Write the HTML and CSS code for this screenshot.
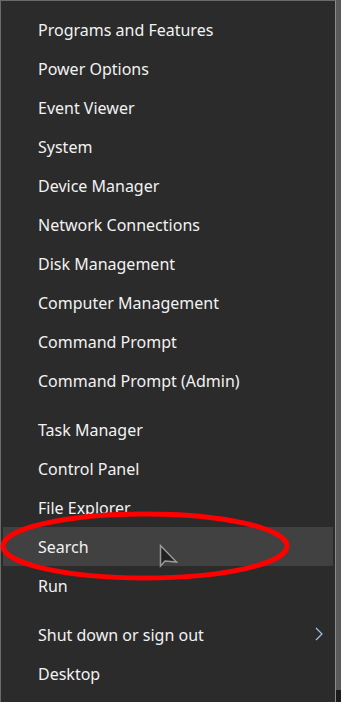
FILE: index.html
```html
<!DOCTYPE html>
<html lang="en">
<head>
  <meta charset="UTF-8">
  <meta name="viewport" content="width=device-width, initial-scale=1.0">
  <title>Quick Link Menu</title>
  <link rel="stylesheet" href="styles.css">
</head>
<body>
  <!-- Win+X context menu -->
  <div class="menu">
    <div class="group">
      <div class="item">Programs and Features</div>
      <div class="item">Power Options</div>
      <div class="item">Event Viewer</div>
      <div class="item">System</div>
      <div class="item">Device Manager</div>
      <div class="item">Network Connections</div>
      <div class="item">Disk Management</div>
      <div class="item">Computer Management</div>
      <div class="item">Command Prompt</div>
      <div class="item">Command Prompt (Admin)</div>
    </div>
    <div class="group">
      <div class="item">Task Manager</div>
      <div class="item">Control Panel</div>
      <div class="item">File Explorer</div>
      <div class="item hover">Search</div>
      <div class="item">Run</div>
    </div>
    <div class="group">
      <div class="item">Shut down or sign out
        <svg class="chevron" width="8" height="14" viewBox="0 0 8 14">
          <path d="M1 1 L7 7 L1 13" fill="none" stroke="#9fc4e8" stroke-width="1.2"/>
        </svg>
      </div>
      <div class="item">Desktop</div>
    </div>

    <!-- red highlight ring and mouse pointer drawn over the menu -->
    <svg class="mark" width="341" height="702" viewBox="0 0 341 702">
      <ellipse cx="145" cy="546" rx="142" ry="32" fill="none" stroke="#ff0000" stroke-width="5"/>
      <path d="M160.5 545.5 L160.5 566 L165 561 L176.5 562 Z" fill="#222" stroke="#9a9a9a" stroke-width="1.5" stroke-linejoin="miter"/>
    </svg>
  </div>
</body>
</html>
```
FILE: styles.css
```css
/* Reset */
* {
  margin: 0;
  padding: 0;
  box-sizing: border-box;
}

/* Desktop strip showing at the right edge */
body {
  width: 341px;
  height: 702px;
  overflow: hidden;
  background: linear-gradient(to bottom, #5a5a5a 0, #5a5a5a 690px, #1c1c1c 690px);
  font-family: 'Noto Sans', 'Open Sans', sans-serif;
}

/* Menu panel */
.menu {
  position: relative;
  width: 336px;
  height: 702px;
  background-color: #2b2b2b;
  border-top: 1px solid #6a6a6a;
  border-left: 1px solid #6a6a6a;
  border-right: 1px solid #8c8c8c;
  padding: 9px 2px 0 2px;
}

.group {
  display: flex;
  flex-direction: column;
}

.group + .group {
  margin-top: 10px;
}

/* Menu rows */
.item {
  position: relative;
  height: 39px;
  display: flex;
  align-items: center;
  padding-left: 35px;
  padding-top: 1px;
  color: #f2f2f2;
  font-size: 16px;
}

.item.hover {
  background-color: #414141;
}

.chevron {
  position: absolute;
  right: 10px;
  top: 12px;
}

/* Annotation overlay */
.mark {
  position: absolute;
  left: -1px;
  top: -1px;
  pointer-events: none;
}
```
